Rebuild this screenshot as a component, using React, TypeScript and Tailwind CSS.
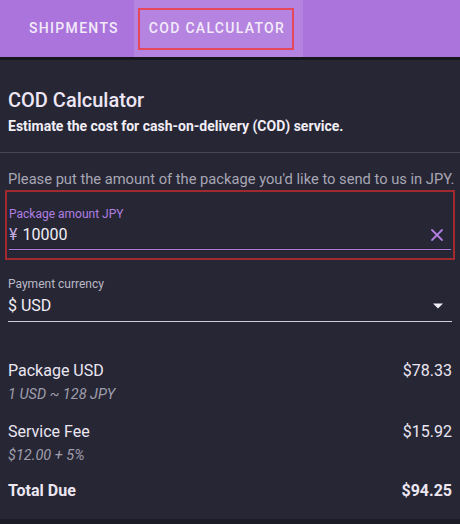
import { X } from 'lucide-react';

const FONT = { fontFamily: 'Roboto, "Noto Sans", sans-serif' };

function Tabs() {
  return (
    <div className="flex h-[57px] bg-[#aa74dc] text-[14px] font-medium uppercase tracking-[1.3px] text-[#f3eafa]">
      <div className="flex w-[134px] items-center justify-center pl-[14px]">Shipments</div>
      <div className="flex w-[169px] items-center bg-[#b584e0] pl-[4px]">
        <div className="flex h-[42px] w-[156px] items-center justify-center border-2 border-[#e5485a] pl-[2px]">
          COD Calculator
        </div>
      </div>
    </div>
  );
}

function Row({ label, value, note, bold }: { label: string; value: string; note?: string; bold?: boolean }) {
  return (
    <div className="flex flex-col">
      <div className={`flex items-center justify-between text-[16px] leading-[22px] text-[#ece6f2] ${bold ? 'font-bold' : ''}`}>
        <span>{label}</span>
        <span>{value}</span>
      </div>
      {note && <div className="mt-[3px] text-[14.5px] italic leading-[20px] text-[#a09eac]">{note}</div>}
    </div>
  );
}

export default function App() {
  return (
    <div style={FONT} className="h-[524px] w-[460px] overflow-hidden bg-[#1c1c26]">
      <Tabs />
      <div className="h-[3px] bg-[#16161d]" />
      <div className="h-[459px] bg-[#262635]">
        <div className="px-[8px] pt-[27px]">
          <h1 className="text-[20px] font-medium leading-[26px] text-[#eee6f4]">COD Calculator</h1>
          <p className="mt-[4px] text-[14px] font-bold leading-[18px] text-[#f2eef6]">
            Estimate the cost for cash-on-delivery (COD) service.
          </p>
        </div>
        <div className="mt-[17px] h-px bg-[#454554]" />
        <div className="px-[8px]">
          <p className="mt-[16px] whitespace-nowrap text-[14.7px] leading-[20px] text-[#a8a6b4]">
            Please put the amount of the package you'd like to send to us in JPY.
          </p>
          <div className="mx-[-3px] mt-[1px] border-2 border-[#a12a2e] px-[2px] pb-[7px] pt-[15px]">
            <div className="text-[12px] leading-[14px] text-[#b27ee2]">Package amount JPY</div>
            <div className="mt-[3px] flex items-center">
              <span className="text-[16px] leading-[22px] text-[#c4aee0]">¥</span>
              <span className="ml-[5px] flex-1 text-[16px] leading-[22px] text-[#f2eef6]">10000</span>
              <X className="mr-[4px] h-[20px] w-[20px] text-[#b27ee2]" strokeWidth={2.2} />
            </div>
            <div className="mt-[2px] h-[3px] border-y border-[#20202a] bg-[#b27ee2]" />
          </div>
          <div className="mt-[17px]">
            <div className="text-[12px] leading-[14px] text-[#bcbac6]">Payment currency</div>
            <div className="mt-[4px] flex items-center">
              <span className="flex-1 text-[16px] leading-[22px] text-[#f2eef6]">$ USD</span>
              <svg width="10" height="6" viewBox="0 0 10 5" className="mr-[9px]">
                <path d="M0 0 L10 0 L5 5 Z" fill="#f2eef6" />
              </svg>
            </div>
            <div className="mt-[4px] h-px bg-[#cfcdd6]" />
          </div>
          <div className="mt-[38px] flex flex-col gap-[16px]">
            <Row label="Package USD" value="$78.33" note="1 USD ~ 128 JPY" />
            <Row label="Service Fee" value="$15.92" note="$12.00 + 5%" />
            <div className="mt-[-2px]">
              <Row label="Total Due" value="$94.25" bold />
            </div>
          </div>
        </div>
      </div>
    </div>
  );
}
